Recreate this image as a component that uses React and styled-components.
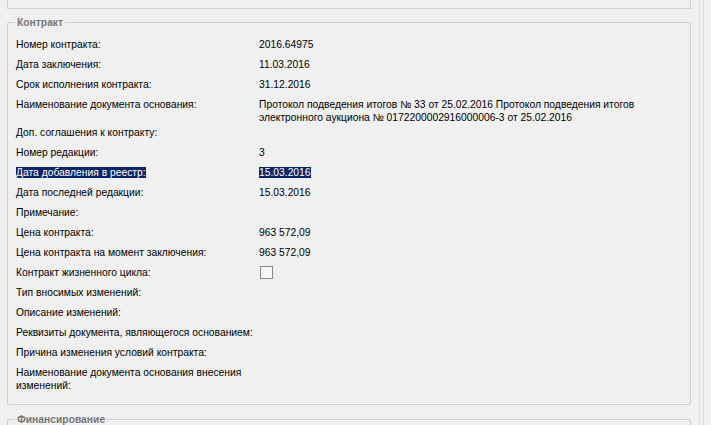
import React from "react";
import styled, { createGlobalStyle } from "styled-components";

const GlobalStyle = createGlobalStyle`
      html, body {
            margin: 0;
            padding: 0;
            background: #f0f0f0;
            overflow: hidden;
      }
      body {
            font-family: "Liberation Sans", Arial, sans-serif;
            font-size: 10.3px;
            color: #000;
      }
`;

const Page = styled.div`
      display: flex;
      align-items: flex-start;
      height: 425px;
      padding-left: 7px;
`;

const Column = styled.div`
      width: 684px;
      display: flex;
      flex-direction: column;
`;

const Rail = styled.div`
      margin-left: 8px;
      width: 3px;
      height: 425px;
      border-left: 1px solid #dcdcdc;
      border-right: 1px solid #dcdcdc;
`;

const TopBox = styled.div`
      height: 8px;
      border: 1px solid #cfcfcf;
      border-top: none;
`;

const Panel = styled.fieldset`
      margin: ${(p) => p.$gap || "7px"} 0 0 0;
      padding: ${(p) => p.$pad || "7px 8px 12px 8px"};
      border: 1px solid #cfcfcf;
      border-radius: 2px;
      min-width: 0;
`;

const Legend = styled.legend`
      margin-left: -1px;
      padding: 0 2px;
      font-weight: bold;
      font-size: 10.3px;
      line-height: 13px;
      color: #767676;
`;

const Row = styled.div`
      display: grid;
      grid-template-columns: 243px 1fr;
      min-height: 20px;
      box-sizing: border-box;
      padding-top: 2px;
      line-height: 13px;
`;

const Label = styled.div`
      padding-right: 3px;
`;

const Value = styled.div``;

const Selected = styled.span`
      background: #0a246a;
      color: #fff;
`;

const Check = styled.span`
      display: block;
      width: 11px;
      height: 11px;
      margin-left: 1px;
      border: 1px solid #8a8a8a;
      background: #f7f7f7;
`;

const rows = [
      ["Номер контракта:", "2016.64975"],
      ["Дата заключения:", "11.03.2016"],
      ["Срок исполнения контракта:", "31.12.2016"],
      [
            "Наименование документа основания:",
            <>
                  Протокол подведения итогов № 33 от 25.02.2016 Протокол подведения итогов
                  <br />
                  электронного аукциона № 0172200002916000006-3 от 25.02.2016
            </>,
      ],
      ["Доп. соглашения к контракту:", ""],
      ["Номер редакции:", "3"],
      [<Selected>Дата добавления в реестр:</Selected>, <Selected>15.03.2016</Selected>],
      ["Дата последней редакции:", "15.03.2016"],
      ["Примечание:", ""],
      ["Цена контракта:", "963 572,09"],
      ["Цена контракта на момент заключения:", "963 572,09"],
      ["Контракт жизненного цикла:", <Check />],
      ["Тип вносимых изменений:", ""],
      ["Описание изменений:", ""],
      ["Реквизиты документа, являющегося основанием:", ""],
      ["Причина изменения условий контракта:", ""],
      ["Наименование документа основания внесения изменений:", ""],
];

export default function App() {
      return (
            <>
                  <GlobalStyle />
                  <Page>
                        <Column>
                              <TopBox />
                              <Panel>
                                    <Legend>Контракт</Legend>
                                    {rows.map(([label, value], i) => (
                                          <Row key={i}>
                                                <Label>{label}</Label>
                                                <Value>{value}</Value>
                                          </Row>
                                    ))}
                              </Panel>
                              <Panel $gap="8px" $pad="6px 8px 40px 8px">
                                    <Legend>Финансирование</Legend>
                              </Panel>
                        </Column>
                        <Rail />
                  </Page>
            </>
      );
}
